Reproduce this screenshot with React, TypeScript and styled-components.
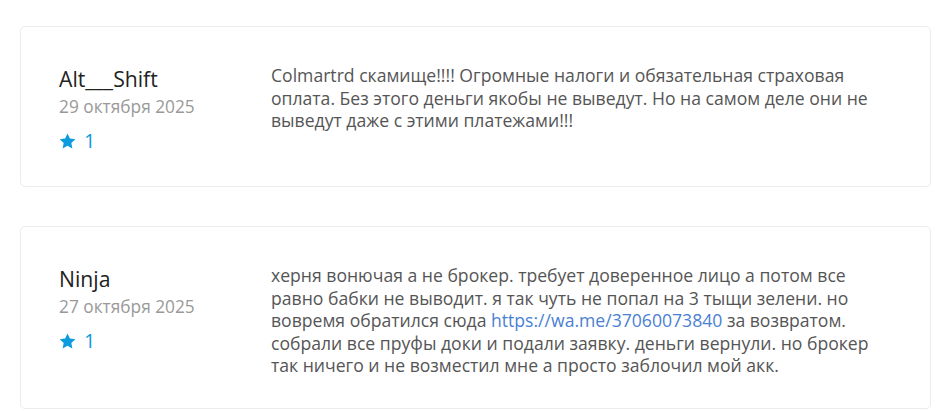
import React from 'react';
import styled, { createGlobalStyle } from 'styled-components';

const GlobalStyle = createGlobalStyle`
  html, body {
    margin: 0;
    padding: 0;
    background: #fff;
  }
  body {
    font-family: 'Open Sans', 'Noto Sans', sans-serif;
  }
`;

const Page = styled.div`
  display: flex;
  flex-direction: column;
  gap: 39px;
  padding: 26px 15px 0 20px;
`;

const Card = styled.div`
  display: flex;
  border: 1px solid #ececec;
  border-radius: 5px;
  padding: 37px 40px 31px 38px;
  background: #fff;
`;

const Author = styled.div`
  flex: 0 0 212px;
  display: flex;
  flex-direction: column;
`;

const Name = styled.div`
  font-size: 21.2px;
  line-height: 30px;
  color: #222;
`;

const Date = styled.div`
  font-size: 17.3px;
  line-height: 25px;
  color: #999;
`;

const Rating = styled.div`
  display: flex;
  align-items: center;
  gap: 8px;
  margin-top: 9px;
  padding-bottom: 1px;
  color: #0d9be0;
  font-size: 20px;
  line-height: 26px;
`;

const Body = styled.div`
  flex: 1;
  font-size: 17.6px;
  line-height: 22.5px;
  color: #555;
`;

const Link = styled.a`
  color: #4a7fd3;
  text-decoration: none;
`;

const Star = () => (
  <svg width="17" height="16" viewBox="0 0 24 23" fill="currentColor">
    <path d="M12 0.8l3.4 7.2 7.9 1-5.8 5.4 1.5 7.8L12 18.4l-7 3.8 1.5-7.8L0.7 9l7.9-1z" />
  </svg>
);

type Review = {
  name: string;
  date: string;
  rating: number;
  text: React.ReactNode;
};

const reviews: Review[] = [
  {
    name: 'Alt___Shift',
    date: '29 октября 2025',
    rating: 1,
    text: 'Colmartrd скамище!!!! Огромные налоги и обязательная страховая оплата. Без этого деньги якобы не выведут. Но на самом деле они не выведут даже с этими платежами!!!',
  },
  {
    name: 'Ninja',
    date: '27 октября 2025',
    rating: 1,
    text: (
      <>
        херня вонючая а не брокер. требует доверенное лицо а потом все равно бабки не выводит. я так чуть не попал на 3 тыщи зелени. но вовремя обратился сюда{' '}
        <Link href="#">https://wa.me/37060073840</Link> за возвратом. собрали все пруфы доки и подали заявку. деньги вернули. но брокер так ничего и не возместил мне а просто заблочил мой акк.
      </>
    ),
  },
];

export default function App() {
  return (
    <>
      <GlobalStyle />
      <Page>
        {reviews.map((r) => (
          <Card key={r.name}>
            <Author>
              <Name>{r.name}</Name>
              <Date>{r.date}</Date>
              <Rating>
                <Star />
                <span>{r.rating}</span>
              </Rating>
            </Author>
            <Body>{r.text}</Body>
          </Card>
        ))}
      </Page>
    </>
  );
}
